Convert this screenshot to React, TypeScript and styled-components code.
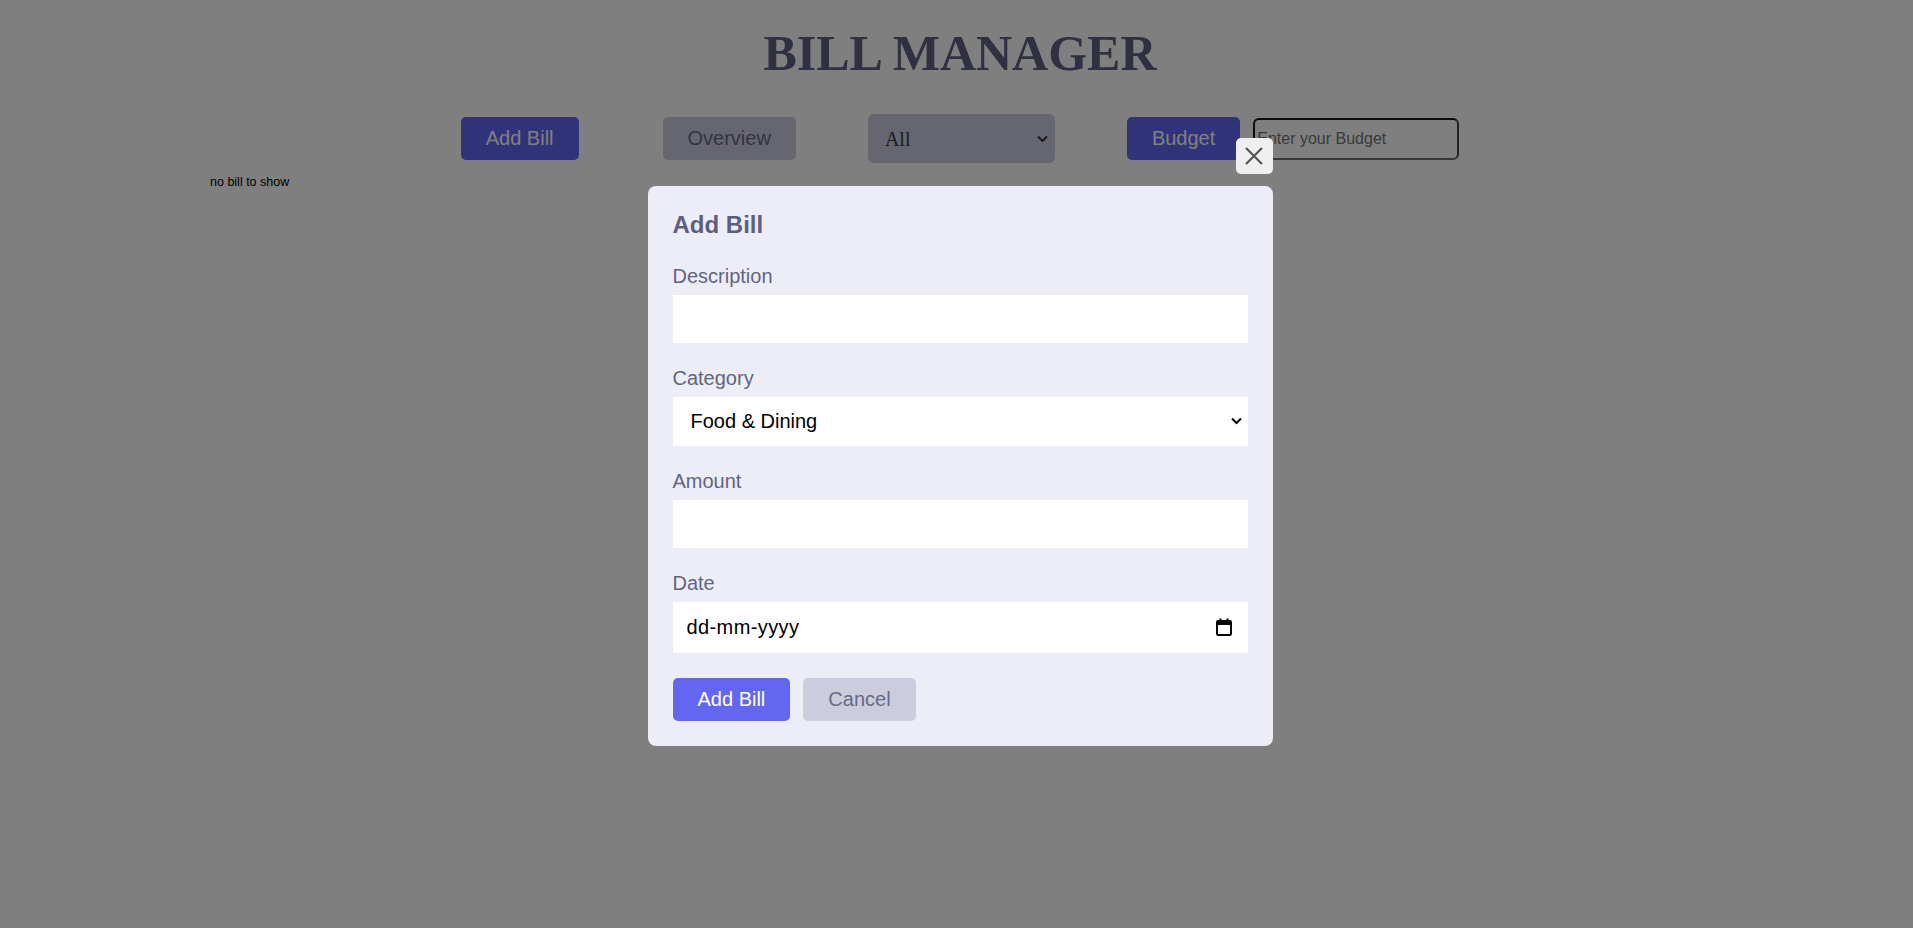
import React from "react";
import styled, { createGlobalStyle } from "styled-components";

const GlobalStyle = createGlobalStyle`
  html, body { margin: 0; padding: 0; background: #ffffff; }
  body { font-family: "Liberation Sans", Arial, sans-serif; }
  * { box-sizing: border-box; }
`;

const Page = styled.div`
  min-height: 928px;
  padding: 25px 0 0 7px;
`;

const Title = styled.h1`
  margin: 0;
  text-align: center;
  font-family: "Liberation Serif", "Times New Roman", serif;
  font-weight: 700;
  font-size: 50px;
  line-height: 57px;
  color: #5e6080;
`;

const Toolbar = styled.div`
  display: flex;
  justify-content: center;
  align-items: center;
  gap: 72px;
  margin-top: 32px;
  height: 49px;
`;

const Button = styled.button<{ $variant: "primary" | "secondary"; $spaceAfter?: number }>`
  font-family: "Liberation Sans", Arial, sans-serif;
  font-size: 20px;
  line-height: 23px;
  padding: 10px 25px;
  border: none;
  border-radius: 5px;
  cursor: pointer;
  margin-right: ${(p) => p.$spaceAfter ?? 0}px;
  background: ${(p) => (p.$variant === "primary" ? "#6366f1" : "#cbcddf")};
  color: ${(p) => (p.$variant === "primary" ? "#ffffff" : "#676983")};
`;

const SelectWrap = styled.div<{ $block?: boolean }>`
  position: relative;
  display: ${(p) => (p.$block ? "block" : "inline-block")};
`;

const Chevron = styled.svg<{ $right: number }>`
  position: absolute;
  right: ${(p) => p.$right}px;
  top: 50%;
  transform: translateY(-50%);
  pointer-events: none;
`;

const FilterSelect = styled.select`
  appearance: none;
  -webkit-appearance: none;
  display: block;
  width: 187px;
  height: 49px;
  padding: 0 24px 0 17px;
  border: none;
  border-radius: 6px;
  background: #cbcddf;
  color: #3a3a3a;
  font-family: "Liberation Serif", "Times New Roman", serif;
  font-size: 20px;
`;

const BudgetGroup = styled.div`
  display: flex;
  align-items: center;
  gap: 13px;
`;

const BudgetInput = styled.input`
  width: 206px;
  height: 42px;
  padding: 0 2px;
  border: 2px solid #1a1a1a;
  border-bottom-color: #707070;
  border-right-color: #444;
  border-radius: 6px;
  background: #ffffff;
  font-family: "Liberation Sans", Arial, sans-serif;
  font-size: 16px;
  &::placeholder { color: #757575; }
`;

const EmptyNote = styled.p`
  margin: 12px 0 0;
  padding-left: 203px;
  font-size: 12.5px;
  line-height: 15px;
  color: #000;
`;

const Overlay = styled.div`
  position: fixed;
  inset: 0;
  padding: 3px 0 0 7px;
  background: rgba(0, 0, 0, 0.5);
  display: flex;
  align-items: center;
  justify-content: center;
`;

const Modal = styled.div`
  position: relative;
  width: 625px;
  padding: 25px;
  background: #ededf7;
  border-radius: 8px;
`;

const CloseButton = styled.button`
  position: absolute;
  top: -48px;
  right: 0;
  width: 37px;
  height: 36px;
  padding: 0;
  border: none;
  border-radius: 5px;
  background: #efefef;
  display: flex;
  align-items: center;
  justify-content: center;
  cursor: pointer;
`;

const ModalTitle = styled.h2`
  margin: 0 0 26px;
  font-size: 24px;
  line-height: 28px;
  font-weight: 700;
  color: #5d5e7e;
`;

const Field = styled.div<{ $last?: boolean }>`
  margin-bottom: ${(p) => (p.$last ? 0 : 24)}px;
`;

const Label = styled.label`
  display: block;
  margin-bottom: 7px;
  font-size: 20px;
  line-height: 23px;
  color: #63647f;
`;

const TextInput = styled.input`
  display: block;
  width: 100%;
  height: 48px;
  padding: 0 14px;
  border: none;
  background: #ffffff;
  font-family: "Liberation Sans", Arial, sans-serif;
  font-size: 20px;
  color: #000;
  outline: none;
`;

const CategorySelect = styled.select`
  appearance: none;
  -webkit-appearance: none;
  display: block;
  width: 100%;
  height: 49px;
  padding: 0 24px 0 18px;
  border: none;
  border-radius: 0;
  background: #ffffff;
  font-family: "Liberation Sans", Arial, sans-serif;
  font-size: 20px;
  color: #000;
`;

const DateBox = styled.div`
  display: flex;
  align-items: center;
  height: 51px;
  padding: 0 16px 0 14px;
  background: #ffffff;
`;

const DateText = styled.input`
  flex: 1;
  min-width: 0;
  border: none;
  padding: 0;
  background: transparent;
  font-family: "Liberation Sans", Arial, sans-serif;
  font-size: 20px;
  letter-spacing: 0.4px;
  color: #000;
  outline: none;
  &::placeholder { color: #000; opacity: 1; }
`;

const Actions = styled.div`
  display: flex;
  gap: 13px;
  margin-top: 25px;
`;

const ChevronIcon = ({ color = "#000", right = 6 }: { color?: string; right?: number }) => (
  <Chevron $right={right} width="11" height="7" viewBox="0 0 11 7" aria-hidden>
    <path d="M1 1 L5.5 5.5 L10 1" stroke={color} strokeWidth="2" fill="none" />
  </Chevron>
);

const CalendarIcon = () => (
  <svg width="16" height="18" viewBox="0 0 16 18" aria-hidden>
    <rect x="1" y="3" width="14" height="14" rx="1.2" fill="none" stroke="#000" strokeWidth="2" />
    <rect x="1" y="3" width="14" height="4" fill="#000" />
    <rect x="3.5" y="0.5" width="2" height="4" fill="#000" />
    <rect x="10.5" y="0.5" width="2" height="4" fill="#000" />
  </svg>
);

const CloseIcon = () => (
  <svg width="18" height="18" viewBox="0 0 18 18" aria-hidden>
    <path d="M1 1 L17 17 M17 1 L1 17" stroke="#555" strokeWidth="2.2" strokeLinecap="butt" fill="none" />
  </svg>
);

export default function App() {
  return (
    <>
      <GlobalStyle />
      <Page>
        <Title>BILL MANAGER</Title>
        <Toolbar>
          <Button $variant="primary" $spaceAfter={12}>Add Bill</Button>
          <Button $variant="secondary">Overview</Button>
          <SelectWrap>
            <FilterSelect defaultValue="All">
              <option>All</option>
              <option>Food &amp; Dining</option>
              <option>Utility</option>
              <option>Shopping</option>
            </FilterSelect>
            <ChevronIcon color="#333" right={7} />
          </SelectWrap>
          <BudgetGroup>
            <Button $variant="primary">Budget</Button>
            <BudgetInput type="number" placeholder="Enter your Budget" />
          </BudgetGroup>
        </Toolbar>
        <EmptyNote>no bill to show</EmptyNote>
      </Page>
      <Overlay>
        <Modal>
          <CloseButton aria-label="Close">
            <CloseIcon />
          </CloseButton>
          <ModalTitle>Add Bill</ModalTitle>
          <Field>
            <Label>Description</Label>
            <TextInput type="text" />
          </Field>
          <Field>
            <Label>Category</Label>
            <SelectWrap $block>
              <CategorySelect defaultValue="Food & Dining">
                <option>Food &amp; Dining</option>
                <option>Utility</option>
                <option>Shopping</option>
                <option>Education</option>
                <option>Personal Care</option>
                <option>Travel</option>
              </CategorySelect>
              <ChevronIcon right={6} />
            </SelectWrap>
          </Field>
          <Field>
            <Label>Amount</Label>
            <TextInput type="number" />
          </Field>
          <Field $last>
            <Label>Date</Label>
            <DateBox>
              <DateText type="text" placeholder="dd-mm-yyyy" />
              <CalendarIcon />
            </DateBox>
          </Field>
          <Actions>
            <Button $variant="primary">Add Bill</Button>
            <Button $variant="secondary">Cancel</Button>
          </Actions>
        </Modal>
      </Overlay>
    </>
  );
}
